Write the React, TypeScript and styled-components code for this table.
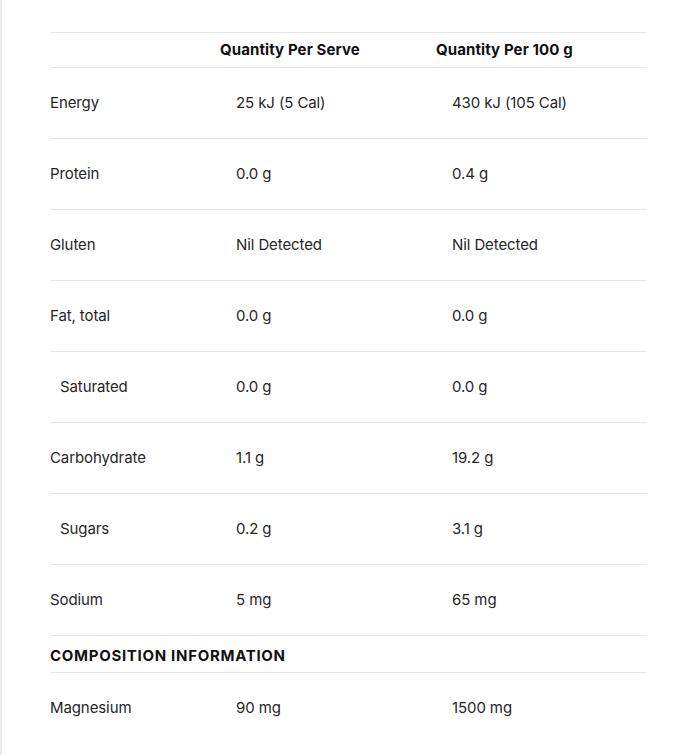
import React from "react";
import styled, { createGlobalStyle } from "styled-components";

const GlobalStyle = createGlobalStyle`
  html, body {
    margin: 0;
    padding: 0;
    background: #ffffff;
  }
  body {
    font-family: Inter, "Liberation Sans", Arial, sans-serif;
    color: #262626;
    border-left: 2px solid #ececec;
    min-height: 755px;
    box-sizing: border-box;
  }
`;

const Wrapper = styled.div`
  padding: 32px 0 0 48px;
`;

const Table = styled.div`
  width: 597px;
  border-top: 1px solid #e6e6e6;
`;

const Row = styled.div<{ $height: number; $last?: boolean }>`
  display: grid;
  grid-template-columns: 170px 216px 211px;
  align-items: center;
  height: ${(p) => p.$height}px;
  padding-bottom: 2px;
  border-bottom: ${(p) => (p.$last ? "none" : "1px solid #e6e6e6")};
  box-sizing: border-box;
`;

const HeadCell = styled.div`
  font-size: 15px;
  font-weight: 700;
  color: #111111;
  letter-spacing: 0.1px;
`;

const Label = styled.div<{ $indent?: boolean }>`
  font-size: 15px;
  padding-left: ${(p) => (p.$indent ? 10 : 0)}px;
  letter-spacing: -0.1px;
`;

const Value = styled.div`
  font-size: 15px;
  padding-left: 16px;
  letter-spacing: -0.1px;
`;

const Section = styled.div`
  grid-column: 1 / -1;
  font-size: 15px;
  font-weight: 700;
  color: #111111;
  text-transform: uppercase;
  letter-spacing: 0.7px;
  padding-top: 5px;
  white-space: nowrap;
`;

type Nutrient = { name: string; serve: string; per100: string; indent?: boolean };

const nutrients: Nutrient[] = [
  { name: "Energy", serve: "25 kJ (5 Cal)", per100: "430 kJ (105 Cal)" },
  { name: "Protein", serve: "0.0 g", per100: "0.4 g" },
  { name: "Gluten", serve: "Nil Detected", per100: "Nil Detected" },
  { name: "Fat, total", serve: "0.0 g", per100: "0.0 g" },
  { name: "Saturated", serve: "0.0 g", per100: "0.0 g", indent: true },
  { name: "Carbohydrate", serve: "1.1 g", per100: "19.2 g" },
  { name: "Sugars", serve: "0.2 g", per100: "3.1 g", indent: true },
  { name: "Sodium", serve: "5 mg", per100: "65 mg" },
];

export default function App() {
  return (
    <>
      <GlobalStyle />
      <Wrapper>
        <Table>
          <Row $height={35}>
            <HeadCell />
            <HeadCell>Quantity Per Serve</HeadCell>
            <HeadCell>Quantity Per 100 g</HeadCell>
          </Row>
          {nutrients.map((n) => (
            <Row key={n.name} $height={71}>
              <Label $indent={n.indent}>{n.name}</Label>
              <Value>{n.serve}</Value>
              <Value>{n.per100}</Value>
            </Row>
          ))}
          <Row $height={37}>
            <Section>Composition Information</Section>
          </Row>
          <Row $height={71} $last>
            <Label>Magnesium</Label>
            <Value>90 mg</Value>
            <Value>1500 mg</Value>
          </Row>
        </Table>
      </Wrapper>
    </>
  );
}
